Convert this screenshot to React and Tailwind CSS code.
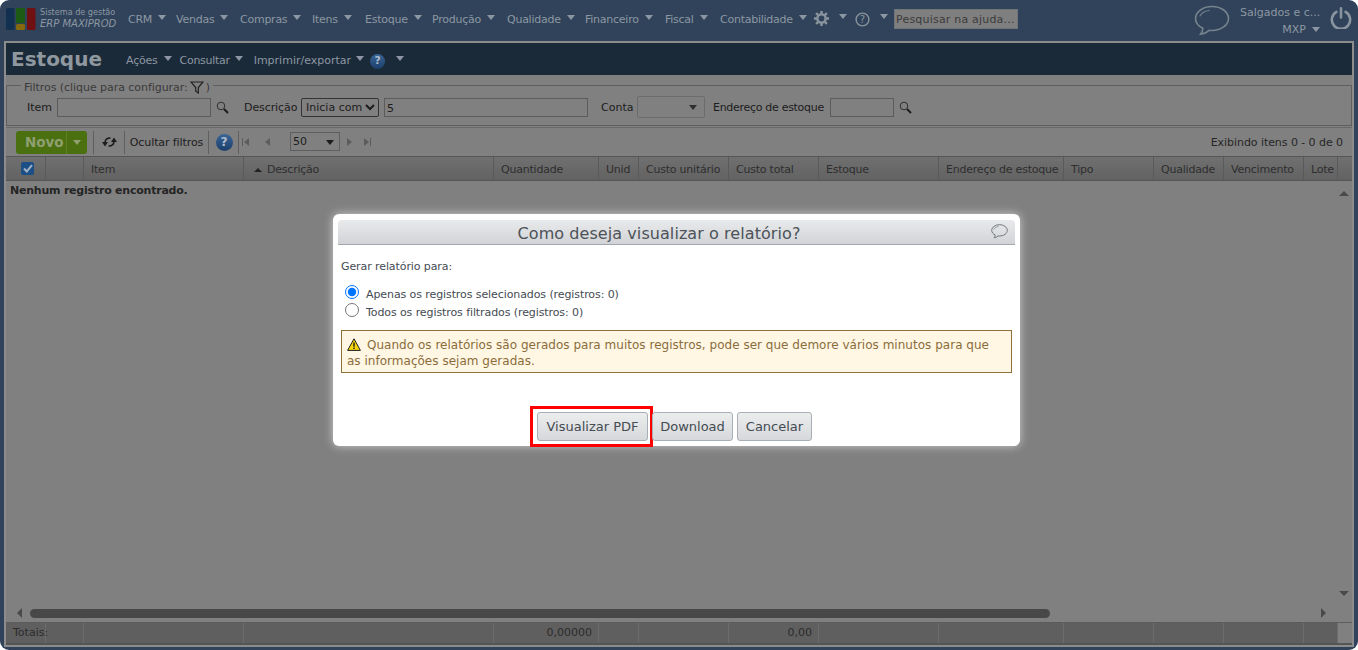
import React from 'react';

const menuItems = [
  { label: 'CRM', width: 'w-[48px]' },
  { label: 'Vendas', width: 'w-[64px]' },
  { label: 'Compras', width: 'w-[72px]' },
  { label: 'Itens', width: 'w-[53px]' },
  { label: 'Estoque', width: 'w-[67px]' },
  { label: 'Produção', width: 'w-[75px]' },
  { label: 'Qualidade', width: 'w-[78px]' },
  { label: 'Financeiro', width: 'w-[80px]' },
  { label: 'Fiscal', width: 'w-[55px]' },
  { label: 'Contabilidade', width: 'w-[93px]' },
];

const columns = [
  { label: '', width: 'w-[40px]' },
  { label: '', width: 'w-[38px]' },
  { label: 'Item', width: 'w-[160px]' },
  { label: 'Descrição', width: 'w-[250px]', sorted: true },
  { label: 'Quantidade', width: 'w-[105px]' },
  { label: 'Unid', width: 'w-[40px]' },
  { label: 'Custo unitário', width: 'w-[90px]' },
  { label: 'Custo total', width: 'w-[90px]' },
  { label: 'Estoque', width: 'w-[120px]' },
  { label: 'Endereço de estoque', width: 'w-[125px]' },
  { label: 'Tipo', width: 'w-[90px]' },
  { label: 'Qualidade', width: 'w-[70px]' },
  { label: 'Vencimento', width: 'w-[80px]' },
  { label: 'Lote', width: 'w-[34px]' },
];

const totals = [
  { text: 'Totais:', width: 'w-[40px]' },
  { text: '', width: 'w-[38px]' },
  { text: '', width: 'w-[160px]' },
  { text: '', width: 'w-[250px]' },
  { text: '0,00000', width: 'w-[105px]', right: true },
  { text: '', width: 'w-[40px]' },
  { text: '', width: 'w-[90px]' },
  { text: '0,00', width: 'w-[90px]', right: true },
  { text: '', width: 'w-[120px]' },
  { text: '', width: 'w-[125px]' },
  { text: '', width: 'w-[90px]' },
  { text: '', width: 'w-[70px]' },
  { text: '', width: 'w-[80px]' },
  { text: '', width: 'w-[34px]' },
];

function Caret({ className = 'border-t-[#8d97a3]' }) {
  return <span className={`inline-block w-0 h-0 border-x-[4px] border-x-transparent border-t-[5px] ${className}`}></span>;
}

function Logo() {
  return (
    <svg width="30" height="23" viewBox="0 0 30 23" className="shrink-0">
      <rect x="0" y="0" width="8.5" height="22" rx="1.5" fill="#12304f" />
      <rect x="10" y="0" width="9" height="15" rx="1" fill="#1d5a14" />
      <rect x="10" y="16" width="9" height="6" rx="1.5" fill="#86680f" />
      <rect x="21" y="0" width="8.5" height="22" rx="1.5" fill="#701012" />
    </svg>
  );
}

function Gear() {
  return (
    <svg width="17" height="17" viewBox="0 0 18 18" fill="none" stroke="#8a949e">
      <circle cx="9" cy="9" r="4.4" strokeWidth="2.6" />
      <path d="M9 1v3M9 14v3M1 9h3M14 9h3M3.3 3.3l2.2 2.2M12.5 12.5l2.2 2.2M14.7 3.3l-2.2 2.2M5.5 12.5l-2.2 2.2" strokeWidth="2.6" />
    </svg>
  );
}

function HelpRing() {
  return (
    <svg width="15" height="15" viewBox="0 0 15 15" fill="none">
      <circle cx="7.5" cy="7.5" r="6.4" stroke="#8a949e" strokeWidth="1.4" />
      <text x="7.5" y="11" textAnchor="middle" fontSize="10" fontFamily="DejaVu Sans" fill="#8a949e">?</text>
    </svg>
  );
}

function Bubble({ size = 36, stroke = '#76838f', width = 1.6 }) {
  return (
    <svg width={size} height={size * 0.86} viewBox="0 0 36 31" fill="none">
      <path d="M18 1.5C8.8 1.5 1.5 7 1.5 13.5c0 4.2 3 7.7 7.3 9.8-.1 2.3-.9 4.5-2.2 6 3.4-.3 6.3-1.8 8.4-4 1 .2 2 .2 3 .2 9.2 0 16.5-5.4 16.5-12S27.2 1.5 18 1.5Z" stroke={stroke} strokeWidth={width} />
      <path d="M6 11c1.5-3 4.5-5 9-5.5" stroke={stroke} strokeWidth={width * 0.7} strokeLinecap="round" />
    </svg>
  );
}

function Power() {
  return (
    <svg width="22" height="22" viewBox="0 0 24 24" fill="none" stroke="#8a949e" strokeWidth="2.8" strokeLinecap="round">
      <path d="M7 5.2a10 10 0 1 0 10 0" />
      <path d="M12 1.5v10" />
    </svg>
  );
}

function Lens() {
  return (
    <svg width="13" height="13" viewBox="0 0 13 13" fill="none" className="shrink-0">
      <circle cx="5" cy="5" r="3.8" stroke="#2f2f2f" strokeWidth="1" />
      <path d="M8 8l4 4" stroke="#1c1c1c" strokeWidth="2" />
    </svg>
  );
}

function HelpBlue({ size = 15 }) {
  return (
    <span
      className="flex items-center justify-center rounded-full bg-gradient-to-b from-[#3a6596] to-[#1c3f6c] text-[#aebccb] font-bold shrink-0"
      style={{ width: size, height: size, fontSize: size * 0.72 }}
    >
      ?
    </span>
  );
}

function Arrow({ dir }) {
  const shapes = {
    up: 'border-x-[5px] border-x-transparent border-b-[5px] border-b-[#4a4a4a]',
    down: 'border-x-[5px] border-x-transparent border-t-[5px] border-t-[#4a4a4a]',
    left: 'border-y-[5px] border-y-transparent border-r-[5px] border-r-[#4a4a4a]',
    right: 'border-y-[5px] border-y-transparent border-l-[5px] border-l-[#4a4a4a]',
  };
  return <span className={`block w-0 h-0 ${shapes[dir]}`}></span>;
}

function PagerIcon({ edge, dir }) {
  return (
    <span className="flex items-center gap-px w-[9px] justify-center">
      {edge && dir === 'left' && <span className="w-px h-[8px] bg-[#5c5c5c]"></span>}
      <span className={`block w-0 h-0 border-y-[4px] border-y-transparent ${dir === 'left' ? 'border-r-[5px] border-r-[#5c5c5c]' : 'border-l-[5px] border-l-[#5c5c5c]'}`}></span>
      {edge && dir === 'right' && <span className="w-px h-[8px] bg-[#5c5c5c]"></span>}
    </span>
  );
}

function DialogButton({ children, highlighted, width }) {
  return (
    <button className={`relative h-[29px] ${width} rounded-[3px] border border-[#a9afb6] bg-gradient-to-b from-[#eceded] to-[#d6d8db] text-[13px] text-[#444b52]`}>
      {children}
      {highlighted && <span className="absolute -left-[8px] -right-[6px] -top-[7px] -bottom-[7px] border-[3px] border-[#fe0000]"></span>}
    </button>
  );
}

export default function App() {
  return (
    <div className="h-[650px] bg-white font-['DejaVu_Sans',sans-serif] text-[11px] overflow-hidden">
      <div className="relative h-full rounded-[9px] overflow-hidden bg-[#30435a] flex flex-col">
        {/* main menu */}
        <header className="h-[41px] shrink-0 flex items-start pl-[6px] pr-[6px] text-[#8d97a3]">
          <div className="mt-[8px]"><Logo /></div>
          <div className="ml-[4px] mt-[6px] w-[85px] leading-[12px]">
            <div className="text-[8.1px] whitespace-nowrap">Sistema de gestão</div>
            <div className="text-[10px] italic whitespace-nowrap">ERP MAXIPROD</div>
          </div>
          <nav className="flex items-center h-[20px] mt-[9px] ml-[3px] tracking-[-0.25px]">
            {menuItems.map((item) => (
              <span key={item.label} className={`flex items-center ${item.width} shrink-0 pt-[3px]`}>
                <span className="whitespace-nowrap">{item.label}</span>
                <span className="ml-[6px] mb-[6px] flex"><Caret /></span>
              </span>
            ))}
          </nav>
          <div className="mt-[10px] flex items-center">
            <Gear />
            <span className="ml-[9px] mb-[4px] flex"><Caret /></span>
            <span className="ml-[8px] mt-[1px]"><HelpRing /></span>
            <span className="ml-[10px] mb-[4px] flex"><Caret /></span>
          </div>
          <div className="mt-[9px] ml-[6px] w-[124px] h-[20px] bg-[#7f7f7f] border border-[#6f7476] text-[#3b3b3b] leading-[20px] pl-px whitespace-nowrap tracking-[0.2px]">Pesquisar na ajuda...</div>
          <div className="ml-auto mt-[5px] mr-[10px]"><Bubble /></div>
          <div className="mt-[6px] w-[78px] text-right">
            <div className="leading-[14px] whitespace-nowrap">Salgados e c...</div>
            <div className="mt-[3px] mr-[-2px] flex items-center justify-end gap-[6px] leading-[14px]">
              MXP <span className="flex mb-[2px]"><Caret /></span>
            </div>
          </div>
          <div className="mt-[7px] ml-[12px]"><Power /></div>
        </header>

        {/* page */}
        <main className="flex-1 mx-[4px] mb-[3px] border-2 border-[#8c8c8c] bg-[#808080] flex flex-col min-h-0">
          <div className="h-[32px] shrink-0 bg-[#1b2a39] flex items-center text-[#8d97a3] pt-[4px]">
            <h1 className="ml-[5px] mb-[4px] text-[20px] font-bold text-[#8f979f] w-[115px] leading-none">Estoque</h1>
            <span className="flex items-center tracking-[-0.2px]">Ações<span className="ml-[6px] mb-[5px] flex"><Caret /></span></span>
            <span className="flex items-center ml-[8px] tracking-[-0.3px]">Consultar<span className="ml-[5px] mb-[5px] flex"><Caret /></span></span>
            <span className="flex items-center ml-[11px]">Imprimir/exportar<span className="ml-[5px] mb-[5px] flex"><Caret /></span></span>
            <span className="ml-[6px]"><HelpBlue /></span>
            <span className="ml-[11px] mb-[5px] flex"><Caret /></span>
          </div>

          {/* filters */}
          <fieldset className="h-[50px] shrink-0 border border-[#5f5f5f] mt-[1px] pl-[20px] pr-0 text-[#1c1c1c]">
            <legend className="ml-[-6px] px-[3px] text-[#3a3a3a] flex items-center h-[18px] pt-[4px] leading-none tracking-[-0.05px]">
              Filtros (clique para configurar:
              <svg width="14" height="13" viewBox="0 0 14 13" fill="none" className="mx-[2px]">
                <path d="M1 1h12L8.3 6.5V12L5.7 10.2V6.5Z" stroke="#222" strokeWidth="1.2" />
              </svg>
              )
            </legend>
            <div className="flex items-center h-[22px] mt-[2px]">
              <span className="pt-[2px]">Item</span>
              <input className="ml-[5px] w-[154px] h-[19px] border border-[#5c5c5c] bg-transparent" readOnly />
              <span className="ml-[5px]"><Lens /></span>
              <span className="ml-[15px] w-[57px] pt-[2px] tracking-[-0.1px]">Descrição</span>
              <select className="w-[78px] h-[19px] border border-[#333] rounded-[2px] bg-transparent text-[11px] text-[#1c1c1c]" defaultValue="Inicia com">
                <option>Inicia com</option>
              </select>
              <input className="ml-[5px] w-[204px] h-[19px] border border-[#5c5c5c] bg-transparent text-[11px] pl-[2px] pt-[2px]" defaultValue="5" />
              <span className="ml-[13px] w-[31px] pt-[2px]">Conta</span>
              <span className="ml-[5px] w-[68px] h-[22px] border border-[#6c6c6c] rounded-[2px] flex items-center justify-end pr-[7px]">
                <Caret className="border-t-[#2f2f2f]" />
              </span>
              <span className="ml-[8px] w-[113px] pt-[2px] whitespace-nowrap tracking-[-0.3px]">Endereço de estoque</span>
              <input className="ml-[4px] w-[64px] h-[19px] border border-[#5c5c5c] bg-transparent" readOnly />
              <span className="ml-[5px]"><Lens /></span>
            </div>
          </fieldset>

          {/* toolbar */}
          <div className="h-[29px] shrink-0 mt-[1px] border-t border-[#6a6a6a] flex items-center text-[#1c1c1c]">
            <div className="ml-[10px] w-[71px] h-[23px] rounded-[3px] bg-[#4a7010] flex items-center text-[#8f9f70] font-bold text-[13.5px]">
              <span className="w-[51px] pl-[9px] border-r border-[#5f8028] leading-[23px]">Novo</span>
              <span className="flex-1 flex justify-center"><Caret className="border-t-[#8f9f70]" /></span>
            </div>
            <span className="ml-[6px] w-[31px] h-[23px] border-l border-[#5f5f5f] flex items-center justify-center">
              <svg width="15" height="12" viewBox="0 0 15 12" fill="none">
                <path d="M3 7C3 3.5 5 2 8.5 2" stroke="#1c1c1c" strokeWidth="1.6" />
                <path d="M0 6h6l-3 4.5Z" fill="#1c1c1c" />
                <path d="M12 5c0 3.5-2 5-5.5 5" stroke="#1c1c1c" strokeWidth="1.6" />
                <path d="M9 6h6l-3-4.5Z" fill="#1c1c1c" />
              </svg>
            </span>
            <span className="w-[85px] h-[23px] pt-[2px] border-l border-r border-[#5f5f5f] flex items-center justify-center whitespace-nowrap tracking-[-0.1px]">Ocultar filtros</span>
            <span className="w-[30px] h-[23px] border-r border-[#5f5f5f] flex items-center justify-center pl-[1px]"><HelpBlue size={17} /></span>
            <span className="ml-[2px] flex items-center gap-[13px]">
              <PagerIcon edge dir="left" />
              <PagerIcon dir="left" />
            </span>
            <span className="ml-[18px] w-[50px] h-[19px] pt-[1px] border border-[#5f5f5f] flex items-center justify-between pl-[2px] pr-[5px] mt-[-1px]">
              50 <Caret className="border-t-[#1c1c1c]" />
            </span>
            <span className="ml-[5px] flex items-center gap-[9px]">
              <PagerIcon dir="right" />
              <PagerIcon edge dir="right" />
            </span>
            <span className="ml-auto mr-[9px] pt-[2px] text-[#262626] whitespace-nowrap tracking-[-0.06px]">Exibindo itens 0 - 0 de 0</span>
          </div>

          {/* grid header */}
          <div className="h-[25px] shrink-0 flex border-y border-[#565656] bg-gradient-to-b from-[#707070] to-[#626262] text-[#2e2e2e] tracking-[-0.22px]">
            {columns.map((col, i) => (
              <div key={i} className={`${col.width} shrink-0 border-r border-[#5a5a5a] flex items-center pl-[7px] pt-[3px] whitespace-nowrap overflow-hidden`}>
                {i === 0 && (
                  <span className="ml-[8px] mb-[3px] w-[13px] h-[13px] rounded-[2px] bg-[#1c4f86] flex items-center justify-center">
                    <svg width="10" height="9" viewBox="0 0 10 9" fill="none"><path d="M1 4.5 3.8 7.5 9 1.2" stroke="#9fb0c2" strokeWidth="2" /></svg>
                  </span>
                )}
                {col.sorted && <span className="ml-[3px] mr-[5px] w-0 h-0 border-x-[4px] border-x-transparent border-b-[4px] border-b-[#222]"></span>}
                {col.label}
              </div>
            ))}
          </div>

          {/* grid body */}
          <div className="flex-1 flex min-h-0">
            <div className="flex-1 pl-[4px] pt-[2px] font-bold text-[#252525] leading-[16px] tracking-[-0.22px]">Nenhum registro encontrado.</div>
            <div className="w-[15px] mr-[1px] flex flex-col items-center justify-between pt-[10px] pb-[8px]">
              <Arrow dir="up" />
              <Arrow dir="down" />
            </div>
          </div>
          <div className="h-[18px] shrink-0 flex items-center pl-[11px]">
            <Arrow dir="left" />
            <span className="ml-[8px] w-[1020px] h-[9px] rounded-full bg-[#484848]"></span>
            <span className="ml-[271px]"><Arrow dir="right" /></span>
          </div>

          {/* totals */}
          <div className="h-[23px] shrink-0 flex bg-[#808080] border-t border-[#5c5c5c] border-b-2 border-b-[#555555] text-[#2b2b2b]">
            {totals.map((cell, i) => (
              <div key={i} className={`${cell.width} shrink-0 bg-[#5f5f5f] border-r border-[#6c6c6c] flex items-center whitespace-nowrap ${i === 0 ? 'relative z-10' : ''} ${cell.right ? 'justify-end pr-[6px]' : 'pl-[7px]'}`}>
                {cell.text}
              </div>
            ))}
          </div>
        </main>

        {/* report dialog */}
        <div className="absolute z-20 left-[333px] top-[214px] w-[687px] h-[232px] bg-white rounded-[6px] shadow-[0_0_10px_rgba(255,255,255,0.6)] px-[5px] pt-[6px] flex flex-col text-[#444b52]">
          <div className="relative h-[25px] shrink-0 rounded-t-[4px] border-b border-[#a3a8ae] bg-gradient-to-b from-[#e9eaec] to-[#d1d3d6] pr-[35px] text-center text-[16px] tracking-[0.07px] leading-[28px] text-[#4c5258]">
            Como deseja visualizar o relatório?
            <span className="absolute right-[7px] top-[4px] flex"><Bubble size={17} stroke="#6a7077" width={2} /></span>
          </div>
          <div className="pl-[3px] pr-[3px] pt-[15px] flex-1 flex flex-col">
            <div className="leading-[14px] tracking-[-0.09px]">Gerar relatório para:</div>
            <label className="mt-[12px] ml-[4px] flex items-center h-[18px] tracking-[-0.09px]">
              <input type="radio" name="scope" defaultChecked className="w-[14px] h-[14px] m-0 mb-[7px] accent-[#0075ff]" />
              <span className="ml-[7px]">Apenas os registros selecionados (registros: 0)</span>
            </label>
            <label className="ml-[4px] flex items-center h-[18px] tracking-[-0.09px]">
              <input type="radio" name="scope" className="w-[14px] h-[14px] m-0 mb-[7px]" />
              <span className="ml-[7px]">Todos os registros filtrados (registros: 0)</span>
            </label>
            <div className="mt-[8px] h-[43px] border border-[#8f6f3a] bg-[#fff6e3] text-[#8a6d3b] px-[5px] pt-[6px] text-[12px] leading-[16px] tracking-[0.02px]">
              <svg width="14" height="13" viewBox="0 0 14 13" className="inline-block mr-[6px] align-[-2px]">
                <path d="M7 .8 13.4 12.4H.6Z" fill="#f7d70a" stroke="#1d1d1d" strokeWidth="1" />
                <path d="M7 4.5v4.2M7 9.6v1.4" stroke="#1d1d1d" strokeWidth="1.4" />
              </svg>
              Quando os relatórios são gerados para muitos registros, pode ser que demore vários minutos para que as informações sejam geradas.
            </div>
            <div className="mt-[39px] ml-[196px] flex gap-[4px]">
              <DialogButton highlighted width="w-[111px]">Visualizar PDF</DialogButton>
              <DialogButton width="w-[81px]">Download</DialogButton>
              <DialogButton width="w-[75px]">Cancelar</DialogButton>
            </div>
          </div>
        </div>
      </div>
    </div>
  );
}
